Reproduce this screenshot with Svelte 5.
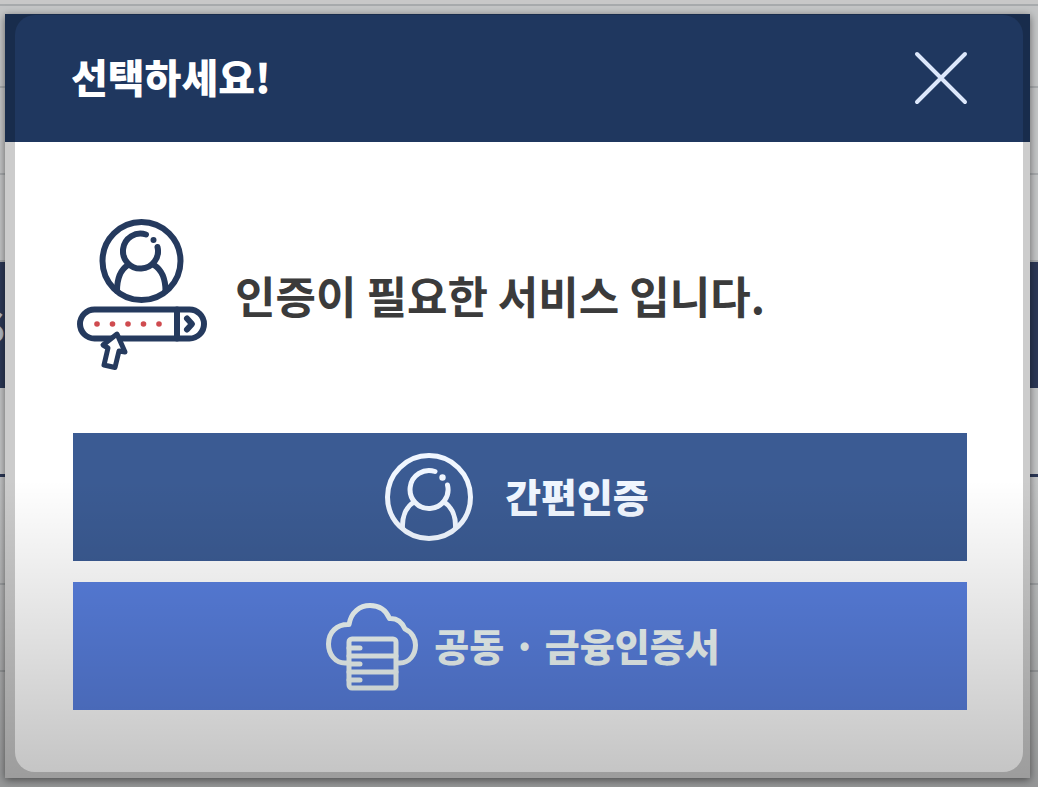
<script>
  let open = $state(true);
</script>

<div class="page">
  <div class="backdrop" aria-hidden="true">
    <div class="row top"></div>
    <div class="row first"></div>
    <div class="row"></div>
    <div class="row"></div>
    <div class="row band"><span>S</span></div>
    <div class="row marked"></div>
    <div class="row second"></div>
    <div class="row"></div>
    <div class="row last"></div>
  </div>

  {#if open}
    <div class="dialog" role="dialog" aria-modal="true" aria-labelledby="title">
      <header>
        <h1 id="title">선택하세요!</h1>
        <button class="close" type="button" aria-label="닫기" onclick={() => (open = false)}>
          <svg width="54" height="54" viewBox="0 0 54 54">
            <path d="M3 3 51 51M51 3 3 51" stroke-width="4" />
          </svg>
        </button>
      </header>
      <div class="content">
        <div class="message">
          <svg class="login" width="130" height="152" viewBox="0 0 130 152">
            <circle cx="64.500" cy="42" r="39" />
            <path d="M69 15.500A17.500 17.500 0 1 0 80.500 28" />
            <path d="M51 46C43 51 40 60 40 72M77 46C85 51 88.500 60 88.500 72" />
            <circle class="dot" cx="76.500" cy="21" r="3" />
            <rect x="3" y="90.500" width="124" height="29" rx="14.500" />
            <path d="M100 90.500v29" />
            <path d="m110 99.500 5 5.500-5 5.500" />
            <g class="pins">
              <circle cx="20" cy="105" r="2.800" />
              <circle cx="35.500" cy="105" r="2.800" />
              <circle cx="51" cy="105" r="2.800" />
              <circle cx="66.500" cy="105" r="2.800" />
              <circle cx="82" cy="105" r="2.800" />
            </g>
            <path class="pointer" d="M40 115 26 126 31 129 27 146 38 148.500 42 132 48 133Z" />
          </svg>
          <p>인증이 필요한 서비스 입니다.</p>
        </div>
        <div class="actions">
          <button class="action simple" type="button">
            <svg width="88" height="88" viewBox="0 0 88 88">
              <circle cx="44" cy="44" r="41.500" />
              <path d="M50 18.500A19 19 0 1 0 62.500 32" />
              <path d="M29 49C21 54 17 64 17.500 75M59 49C67 54 71 64 70.500 75" />
              <circle class="dot" cx="57.500" cy="24.500" r="3.200" />
            </svg>
            <span>간편인증</span>
          </button>
          <button class="action joint" type="button">
            <svg width="92" height="88" viewBox="0 0 92 88">
              <path d="M23 60H19C9 60 2.500 51 2.500 41C2.500 29 11 21 23 21.500C25 9 34 2.500 44 2.500C53 2.500 60 7 63.500 15.500C71 15 76 19 79 26C86 29 89.500 36 89.500 42C89.500 52 83 60 74 60H71" />
              <rect x="23" y="36" width="47" height="49" rx="3" />
              <path d="M23 53h47M23 69h47M23 45h11M23 61h11M23 77h11" />
            </svg>
            <span>공동 · 금융인증서</span>
          </button>
        </div>
      </div>
    </div>
  {/if}
  <div class="spotlight" aria-hidden="true"></div>
  <div class="fade" aria-hidden="true"></div>
</div>

<style>
  :global(body) {
    margin: 0;
  }
  .page {
    position: relative;
    box-sizing: border-box;
    min-height: 100vh;
    padding: 14px 8px 9px 5px;
    overflow: hidden;
    display: flex;
    background: #fafafa;
    font-family: "Noto Sans CJK KR", "Noto Sans", sans-serif;
  }
  .backdrop,
  .fade {
    position: absolute;
    inset: 0;
    pointer-events: none;
  }
  .backdrop {
    display: flex;
    flex-direction: column;
  }
  .row {
    box-sizing: border-box;
    height: 87px;
    flex: none;
    border-bottom: 2px solid #d2d6d9;
    background: #f5f7f8;
  }
  .row.top {
    height: 6px;
    background: #fafafa;
  }
  .row.first {
    height: 82px;
  }
  .row.band {
    display: flex;
    align-items: center;
    height: 126px;
    background: #37466c;
    border: 0;
    color: #dfe8f5;
    font-size: 40px;
    font-weight: 700;
  }
  .band span {
    margin-left: -20px;
  }
  .row.marked {
    height: 89px;
    border-bottom: 3px solid #37466c;
  }
  .row.second {
    height: 108px;
  }
  .row.last {
    flex: 1;
    border: 0;
  }
  .dialog {
    position: relative;
    flex: 1;
    display: flex;
    flex-direction: column;
    background: #fff;
    box-shadow: 0 2px 8px rgba(0, 0, 0, 0.5);
  }
  header {
    display: flex;
    align-items: center;
    justify-content: space-between;
    height: 128px;
    padding: 0 62px 0 66px;
    background: #1f375f;
  }
  h1 {
    margin: 0;
    padding-bottom: 4px;
    color: #fff;
    font-size: 40px;
    line-height: 56px;
    font-weight: 900;
  }
  svg {
    display: block;
    flex: none;
    fill: none;
    stroke: currentColor;
    stroke-linecap: round;
    stroke-linejoin: round;
  }
  button {
    border: 0;
    font: inherit;
    cursor: pointer;
  }
  .close {
    padding: 0;
    color: #dce7fb;
    background: none;
  }
  .content {
    padding: 77px 63px 68px 68px;
  }
  .message {
    display: flex;
    align-items: center;
    gap: 28px;
    padding-left: 4px;
    margin-bottom: 62px;
  }
  .login {
    color: #253a5e;
    stroke-width: 6;
  }
  .dot {
    fill: currentColor;
    stroke: none;
  }
  .pins {
    fill: #cf4b4f;
    stroke: none;
  }
  .pointer {
    fill: #fff;
    stroke-width: 5;
  }
  p {
    margin: 0;
    color: #3b3b3b;
    font-size: 44px;
    line-height: 64px;
    font-weight: 700;
  }
  .actions {
    display: grid;
    gap: 21px;
  }
  .action {
    display: flex;
    align-items: center;
    justify-content: center;
    height: 128px;
    font-size: 39px;
    line-height: 56px;
    font-weight: 900;
  }
  .action span {
    padding-bottom: 4px;
  }
  .simple {
    gap: 32px;
    padding: 0 6px 0 0;
    color: #f0f6ff;
    background: #3b5b93;
    stroke-width: 5;
  }
  .joint {
    gap: 16px;
    padding: 2px 0 0 6px;
    color: #f2fbf9;
    background: #5980e0;
    font-size: 38px;
    stroke-width: 5;
  }
  .spotlight {
    position: absolute;
    inset: 15px;
    border-radius: 20px;
    box-shadow: 0 0 0 40px rgba(0, 0, 0, 0.2);
    pointer-events: none;
  }
  .fade {
    background: linear-gradient(transparent 61%, rgba(0, 0, 0, 0.24));
  }
</style>
